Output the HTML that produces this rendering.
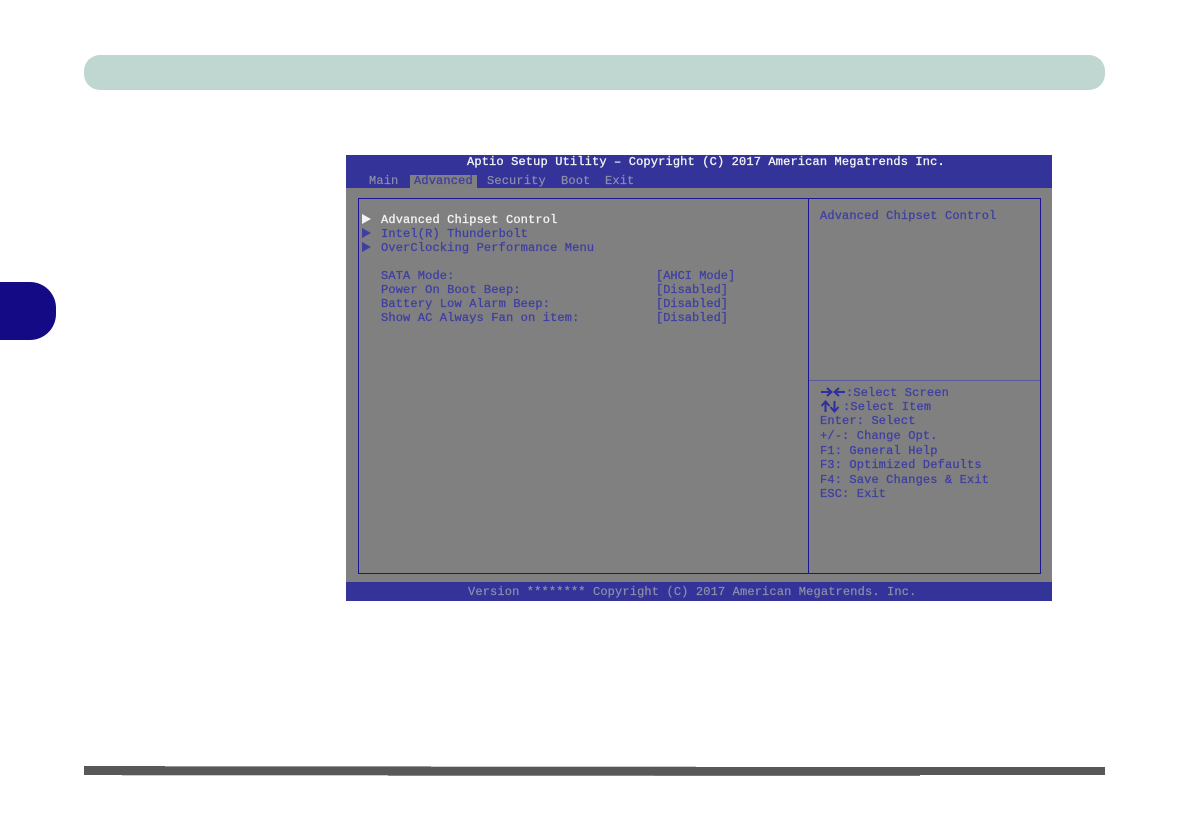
<!DOCTYPE html>
<html><head><meta charset="utf-8"><style>
html,body{margin:0;padding:0;background:#fff}
#p{position:relative;width:1190px;height:838px;overflow:hidden;background:#fff}
.a{position:absolute}
.t{position:absolute;white-space:pre;font:12px/14px "Liberation Mono",monospace;letter-spacing:.15px;color:#3f3fa2;-webkit-text-stroke:.3px currentColor;filter:blur(.35px)}
.w{color:#f4f4f4}
.n{color:#8f8fa8;-webkit-text-stroke:.2px currentColor}
.v{letter-spacing:0}
</style></head><body><div id="p">
<div class="a" style="left:84px;top:55px;width:1021px;height:35px;background:#bfd6d1;border-radius:16px"></div>
<div class="a" style="left:0;top:282px;width:56px;height:58px;background:#140a85;border-radius:0 26px 26px 0"></div>
<div class="a" style="left:84px;top:767px;width:1021px;height:8px;background:#585858"></div>
<div class="a" style="left:84px;top:766px;width:81px;height:1px;background:#585858"></div>
<div class="a" style="left:165px;top:766px;width:266px;height:1px;background:#999"></div>
<div class="a" style="left:431px;top:766px;width:265px;height:1px;background:#ccc"></div>
<div class="a" style="left:122px;top:775px;width:266px;height:1px;background:#ccc"></div>
<div class="a" style="left:388px;top:775px;width:266px;height:1px;background:#888"></div>
<div class="a" style="left:654px;top:775px;width:266px;height:1px;background:#777"></div>

<div class="a" style="left:346px;top:155px;width:706px;height:446px;background:#808080"></div>
<div class="a" style="left:346px;top:155px;width:706px;height:33px;background:#333399"></div>
<div class="a" style="left:346px;top:582px;width:706px;height:19px;background:#333399"></div>
<div class="a" style="left:410px;top:175px;width:67px;height:13px;background:#808080"></div>
<div class="a" style="left:358px;top:198px;width:681px;height:374px;border:1px solid #1c1490"></div>
<div class="a" style="left:808px;top:198px;width:1px;height:375px;background:#1c1490"></div>
<div class="a" style="left:809px;top:380px;width:231px;height:1px;background:#5a5aa0"></div>

<div class="t w" style="left:467px;top:155px">Aptio Setup Utility – Copyright (C) 2017 American Megatrends Inc.</div>
<div class="t n" style="left:369px;top:174px">Main</div>
<div class="t" style="left:414px;top:174px;color:#3f3fa0">Advanced</div>
<div class="t n" style="left:487px;top:174px">Security</div>
<div class="t n" style="left:561px;top:174px">Boot</div>
<div class="t n" style="left:605px;top:174px">Exit</div>

<svg class="a" style="left:362px;top:213px" width="10" height="42"><path d="M0 1L9 6L0 11Z" fill="#f4f4f4"/><path d="M0 15L9 20L0 25Z" fill="#3f3fa2"/><path d="M0 29L9 34L0 39Z" fill="#3f3fa2"/></svg>
<div class="t w" style="left:381px;top:213px">Advanced Chipset Control</div>
<div class="t" style="left:381px;top:227px">Intel(R) Thunderbolt</div>
<div class="t" style="left:381px;top:241px">OverClocking Performance Menu</div>
<div class="t" style="left:381px;top:269px">SATA Mode:</div>
<div class="t" style="left:381px;top:283px">Power On Boot Beep:</div>
<div class="t" style="left:381px;top:297px">Battery Low Alarm Beep:</div>
<div class="t" style="left:381px;top:311px">Show AC Always Fan on item:</div>
<div class="t v" style="left:656px;top:269px">[AHCI Mode]</div>
<div class="t v" style="left:656px;top:283px">[Disabled]</div>
<div class="t v" style="left:656px;top:297px">[Disabled]</div>
<div class="t v" style="left:656px;top:311px">[Disabled]</div>

<div class="t" style="left:820px;top:209px">Advanced Chipset Control</div>

<svg class="a" style="left:820px;top:386px" width="30" height="28" fill="none" stroke="#2e2ea0" stroke-width="2"><path d="M1 6H11M7 2L11.500 6L7 10"/><path d="M25 6H15M19 2L14.500 6L19 10"/><path d="M5.500 26V16M1.500 20L5.500 15.500L9.500 20"/><path d="M14.500 15V25M10.500 21L14.500 25.500L18.500 21"/></svg>
<div class="t" style="left:846px;top:386px">:Select Screen</div>
<div class="t" style="left:843px;top:400px">:Select Item</div>
<div class="t" style="left:820px;top:414px">Enter: Select</div>
<div class="t" style="left:820px;top:429px">+/-: Change Opt.</div>
<div class="t" style="left:820px;top:444px">F1: General Help</div>
<div class="t" style="left:820px;top:458px">F3: Optimized Defaults</div>
<div class="t" style="left:820px;top:473px">F4: Save Changes &amp; Exit</div>
<div class="t" style="left:820px;top:487px">ESC: Exit</div>

<div class="t n" style="left:468px;top:585px">Version ******** Copyright (C) 2017 American Megatrends. Inc.</div>
</div></body></html>
